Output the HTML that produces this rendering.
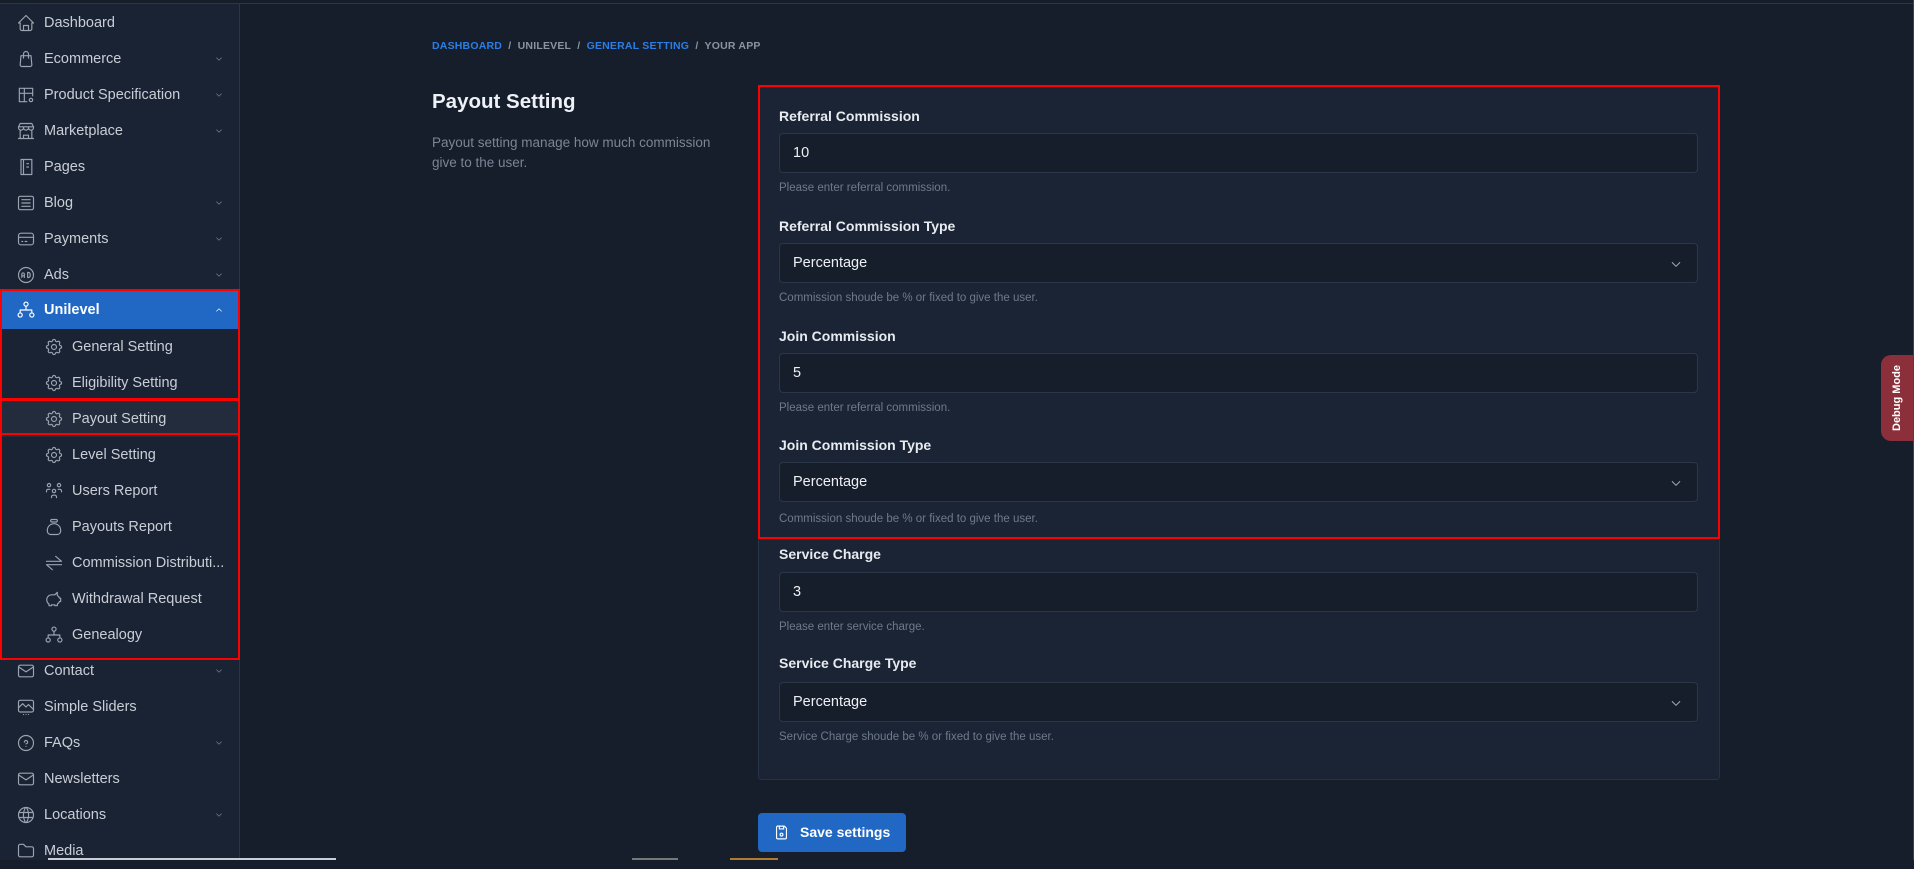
<!DOCTYPE html>
<html><head><meta charset="utf-8"><style>
*{box-sizing:border-box;margin:0;padding:0}
body{width:1914px;height:860px;overflow:hidden;background:#161e2b;font-family:"Liberation Sans",sans-serif;position:relative;color:#dfe3ea}
.topline{position:absolute;left:0;top:3px;width:1914px;height:1px;background:#2b3648}
.side{position:absolute;left:0;top:4px;width:240px;height:856px;background:#1a2334;border-right:1px solid #2a3546}
.it{position:absolute;left:0;width:239px;height:36px;display:flex;align-items:center;font-size:14.5px;color:#c9ced6}
.it svg{position:absolute;left:16px;width:20px;height:20px;fill:none;stroke:#9aa3b0;stroke-width:1.4;stroke-linecap:round;stroke-linejoin:round}
.it span{position:absolute;left:44px}
.it.sub svg{left:44px}
.it.sub span{left:72px}
.it .chev{left:214px;width:10px;height:10px;stroke:#7d8695}
.act{background:#2068c4;color:#fff;font-weight:bold}
.act svg{stroke:#fff}
.red{position:absolute;border:2.5px solid #f00}
.bc{position:absolute;left:432px;top:40px;font-size:10.5px;font-weight:bold;letter-spacing:.2px;color:#8a93a1}
.bc b{color:#2b7ee6}
h1{position:absolute;left:432px;top:90px;font-size:20.5px;font-weight:bold;color:#eef1f5}
.desc{position:absolute;left:432px;top:133px;width:296px;font-size:13.5px;line-height:20px;color:#7b8594}
.card{position:absolute;left:758px;top:86px;width:962px;height:694px;background:#1a2435;border:1px solid #263245;border-radius:3px}
.lbl{position:absolute;left:779px;font-size:14px;font-weight:bold;color:#e8ebf0}
.inp{position:absolute;left:779px;width:919px;height:40px;background:#161e2b;border:1px solid #2b3648;border-radius:4px;font-size:14.5px;color:#eef0f3;padding-left:13px;line-height:38px}
.inp svg{position:absolute;right:14px;top:13px;width:14px;height:14px;fill:none;stroke:#a5adb9;stroke-width:1.6}
.help{position:absolute;left:779px;font-size:11.5px;color:#6f7a89}
.btn{position:absolute;left:758px;top:813px;width:148px;height:39px;background:#2068c4;border-radius:4px;color:#fff;font-size:14px;font-weight:bold;line-height:39px;padding-left:42px}
.btn svg{position:absolute;left:15px;top:11px;width:17px;height:17px;fill:none;stroke:#fff;stroke-width:1.6}
.dbg{position:absolute;left:1881px;top:355px;width:32px;height:86px;background:#8b2f3a;border-radius:10px 0 0 10px}
.dbg span{position:absolute;left:50%;top:50%;transform:translate(-50%,-50%) rotate(-90deg);white-space:nowrap;font-size:11px;font-weight:bold;color:#fff}
</style></head><body>
<div class="topline"></div>
<div class="side"></div>
<div class="it" style="top:5px"><svg viewBox="0 0 24 24"><path d="M5 12H3l9-9 9 9h-2M5 12v7a2 2 0 002 2h10a2 2 0 002-2v-7M9 21v-6h6v6"/></svg><span>Dashboard</span></div>
<div class="it" style="top:41px"><svg viewBox="0 0 24 24"><path d="M6 8h12l1 11a2 2 0 01-2 2H7a2 2 0 01-2-2zM9 11V6a3 3 0 016 0v5"/></svg><span>Ecommerce</span><svg class="chev" viewBox="0 0 24 24"><path d="M6 9l6 6 6-6"/></svg></div>
<div class="it" style="top:77px"><svg viewBox="0 0 24 24"><path d="M4 4h16v9M4 4v16h9M4 10h16M10 4v16"/><circle cx="18" cy="18" r="2"/></svg><span>Product Specification</span><svg class="chev" viewBox="0 0 24 24"><path d="M6 9l6 6 6-6"/></svg></div>
<div class="it" style="top:113px"><svg viewBox="0 0 24 24"><path d="M3 21h18M3 7v1a3 3 0 006 0V7m0 1a3 3 0 006 0V7m0 1a3 3 0 006 0V7H3l2-4h14l2 4M5 21V10.8M19 21V10.8M9 21v-4h6v4"/></svg><span>Marketplace</span><svg class="chev" viewBox="0 0 24 24"><path d="M6 9l6 6 6-6"/></svg></div>
<div class="it" style="top:149px"><svg viewBox="0 0 24 24"><path d="M6 3h13v18H6zM9 3v18M13 8h2M13 12h2"/></svg><span>Pages</span></div>
<div class="it" style="top:185px"><svg viewBox="0 0 24 24"><rect x="3" y="4" width="18" height="16" rx="2"/><path d="M7 8h10M7 12h10M7 16h10"/></svg><span>Blog</span><svg class="chev" viewBox="0 0 24 24"><path d="M6 9l6 6 6-6"/></svg></div>
<div class="it" style="top:221px"><svg viewBox="0 0 24 24"><rect x="3" y="5" width="18" height="14" rx="3"/><path d="M3 10h18M7 15h1M11 15h2"/></svg><span>Payments</span><svg class="chev" viewBox="0 0 24 24"><path d="M6 9l6 6 6-6"/></svg></div>
<div class="it" style="top:257px"><svg viewBox="0 0 24 24"><circle cx="12" cy="12" r="9"/><path d="M7 15v-4a1.5 1.5 0 013 0v4M7 13h3M14 9v6h1a2 2 0 002-2v-2a2 2 0 00-2-2z"/></svg><span>Ads</span><svg class="chev" viewBox="0 0 24 24"><path d="M6 9l6 6 6-6"/></svg></div>
<div class="it act" style="top:291px;height:38px"><svg viewBox="0 0 24 24"><circle cx="12" cy="5" r="2.5"/><circle cx="5" cy="18" r="2.5"/><circle cx="19" cy="18" r="2.5"/><path d="M12 7.5V12M5 15.5V12h14v3.5"/></svg><span>Unilevel</span><svg class="chev" viewBox="0 0 24 24" style="stroke:#fff"><path d="M6 15l6-6 6 6"/></svg></div>
<div class="it sub" style="top:329px"><svg viewBox="0 0 24 24"><path d="M10.3 4.3c.4-1.8 3-1.8 3.4 0a1.7 1.7 0 002.6 1.1c1.5-.9 3.3.8 2.4 2.4a1.7 1.7 0 001 2.5c1.8.4 1.8 3 0 3.4a1.7 1.7 0 00-1 2.6c.9 1.5-.9 3.3-2.4 2.4a1.7 1.7 0 00-2.6 1c-.4 1.8-3 1.8-3.4 0a1.7 1.7 0 00-2.6-1c-1.5.9-3.3-.9-2.4-2.4a1.7 1.7 0 00-1-2.6c-1.8-.4-1.8-3 0-3.4a1.7 1.7 0 001-2.5c-.9-1.6.9-3.3 2.4-2.4a1.7 1.7 0 002.6-1.1z"/><circle cx="12" cy="12" r="3"/></svg><span>General Setting</span></div>
<div class="it sub" style="top:365px"><svg viewBox="0 0 24 24"><path d="M10.3 4.3c.4-1.8 3-1.8 3.4 0a1.7 1.7 0 002.6 1.1c1.5-.9 3.3.8 2.4 2.4a1.7 1.7 0 001 2.5c1.8.4 1.8 3 0 3.4a1.7 1.7 0 00-1 2.6c.9 1.5-.9 3.3-2.4 2.4a1.7 1.7 0 00-2.6 1c-.4 1.8-3 1.8-3.4 0a1.7 1.7 0 00-2.6-1c-1.5.9-3.3-.9-2.4-2.4a1.7 1.7 0 00-1-2.6c-1.8-.4-1.8-3 0-3.4a1.7 1.7 0 001-2.5c-.9-1.6.9-3.3 2.4-2.4a1.7 1.7 0 002.6-1.1z"/><circle cx="12" cy="12" r="3"/></svg><span>Eligibility Setting</span></div>
<div class="it sub" style="top:401px;background:#222c3c"><svg viewBox="0 0 24 24"><path d="M10.3 4.3c.4-1.8 3-1.8 3.4 0a1.7 1.7 0 002.6 1.1c1.5-.9 3.3.8 2.4 2.4a1.7 1.7 0 001 2.5c1.8.4 1.8 3 0 3.4a1.7 1.7 0 00-1 2.6c.9 1.5-.9 3.3-2.4 2.4a1.7 1.7 0 00-2.6 1c-.4 1.8-3 1.8-3.4 0a1.7 1.7 0 00-2.6-1c-1.5.9-3.3-.9-2.4-2.4a1.7 1.7 0 00-1-2.6c-1.8-.4-1.8-3 0-3.4a1.7 1.7 0 001-2.5c-.9-1.6.9-3.3 2.4-2.4a1.7 1.7 0 002.6-1.1z"/><circle cx="12" cy="12" r="3"/></svg><span>Payout Setting</span></div>
<div class="it sub" style="top:437px"><svg viewBox="0 0 24 24"><path d="M10.3 4.3c.4-1.8 3-1.8 3.4 0a1.7 1.7 0 002.6 1.1c1.5-.9 3.3.8 2.4 2.4a1.7 1.7 0 001 2.5c1.8.4 1.8 3 0 3.4a1.7 1.7 0 00-1 2.6c.9 1.5-.9 3.3-2.4 2.4a1.7 1.7 0 00-2.6 1c-.4 1.8-3 1.8-3.4 0a1.7 1.7 0 00-2.6-1c-1.5.9-3.3-.9-2.4-2.4a1.7 1.7 0 00-1-2.6c-1.8-.4-1.8-3 0-3.4a1.7 1.7 0 001-2.5c-.9-1.6.9-3.3 2.4-2.4a1.7 1.7 0 002.6-1.1z"/><circle cx="12" cy="12" r="3"/></svg><span>Level Setting</span></div>
<div class="it sub" style="top:473px"><svg viewBox="0 0 24 24"><circle cx="12" cy="12" r="2"/><circle cx="6" cy="5" r="2"/><circle cx="18" cy="5" r="2"/><path d="M9 20v-1a2 2 0 012-2h2a2 2 0 012 2v1M3 13v-1a2 2 0 012-2h2M21 13v-1a2 2 0 00-2-2h-2"/></svg><span>Users Report</span></div>
<div class="it sub" style="top:509px"><svg viewBox="0 0 24 24"><path d="M9.5 3h5a1.5 1.5 0 010 3h-5a1.5 1.5 0 010-3zM4 17v-1a8 8 0 0116 0v1a4 4 0 01-4 4H8a4 4 0 01-4-4z"/></svg><span>Payouts Report</span></div>
<div class="it sub" style="top:545px"><svg viewBox="0 0 24 24"><path d="M3 10h18L14 4M21 14H3l7 6"/></svg><span>Commission Distributi...</span></div>
<div class="it sub" style="top:581px"><svg viewBox="0 0 24 24"><path d="M16 4v3.8A6 6 0 0118.6 11H20v4h-1.4a6 6 0 01-2.6 3V20h-3v-1h-4v1H6v-2A6 6 0 0110 7h3l3-3z"/></svg><span>Withdrawal Request</span></div>
<div class="it sub" style="top:617px"><svg viewBox="0 0 24 24"><circle cx="12" cy="5" r="2.5"/><circle cx="5" cy="18" r="2.5"/><circle cx="19" cy="18" r="2.5"/><path d="M12 7.5V12M5 15.5V12h14v3.5"/></svg><span>Genealogy</span></div>
<div class="it" style="top:653px"><svg viewBox="0 0 24 24"><rect x="3" y="5" width="18" height="14" rx="2"/><path d="M3 7l9 6 9-6"/></svg><span>Contact</span><svg class="chev" viewBox="0 0 24 24"><path d="M6 9l6 6 6-6"/></svg></div>
<div class="it" style="top:689px"><svg viewBox="0 0 24 24"><rect x="3" y="4" width="18" height="14" rx="2"/><path d="M3 13l5-5 4 4 3-3 6 6M9 21h.01M12 21h.01M15 21h.01"/></svg><span>Simple Sliders</span></div>
<div class="it" style="top:725px"><svg viewBox="0 0 24 24"><circle cx="12" cy="12" r="9"/><path d="M12 16v.01M12 13a2 2 0 10-2-2"/></svg><span>FAQs</span><svg class="chev" viewBox="0 0 24 24"><path d="M6 9l6 6 6-6"/></svg></div>
<div class="it" style="top:761px"><svg viewBox="0 0 24 24"><rect x="3" y="5" width="18" height="14" rx="2"/><path d="M3 7l9 6 9-6"/></svg><span>Newsletters</span></div>
<div class="it" style="top:797px"><svg viewBox="0 0 24 24"><circle cx="12" cy="12" r="9"/><path d="M3.6 9h16.8M3.6 15h16.8M11.5 3a17 17 0 000 18M12.5 3a17 17 0 010 18"/></svg><span>Locations</span><svg class="chev" viewBox="0 0 24 24"><path d="M6 9l6 6 6-6"/></svg></div>
<div class="it" style="top:833px"><svg viewBox="0 0 24 24"><path d="M5 4h4l3 3h7a2 2 0 012 2v8a2 2 0 01-2 2H5a2 2 0 01-2-2V6a2 2 0 012-2"/></svg><span>Media</span></div>

<div class="red" style="left:0;top:289px;width:240px;height:111px"></div>
<div class="red" style="left:0;top:399px;width:240px;height:36px"></div>
<div class="red" style="left:0;top:433px;width:240px;height:227px"></div>

<div style="position:absolute;left:48px;top:858px;width:288px;height:2px;background:#c9ced6"></div>
<div style="position:absolute;left:632px;top:858px;width:46px;height:2px;background:#777"></div>
<div style="position:absolute;left:730px;top:858px;width:48px;height:2px;background:#b07a30"></div>

<div class="bc"><b>DASHBOARD</b> &nbsp;/&nbsp; UNILEVEL &nbsp;/&nbsp; <b>GENERAL SETTING</b> &nbsp;/&nbsp; YOUR APP</div>
<h1>Payout Setting</h1>
<div class="desc">Payout setting manage how much commission give to the user.</div>

<div class="card"></div>

<div class="lbl" style="top:108px">Referral Commission</div>
<div class="inp" style="top:133px">10</div>
<div class="help" style="top:182px">Please enter referral commission.</div>

<div class="lbl" style="top:218px">Referral Commission Type</div>
<div class="inp" style="top:243px">Percentage<svg viewBox="0 0 24 24"><path d="M5 9l7 7 7-7"/></svg></div>
<div class="help" style="top:292px">Commission shoude be % or fixed to give the user.</div>

<div class="lbl" style="top:328px">Join Commission</div>
<div class="inp" style="top:353px">5</div>
<div class="help" style="top:402px">Please enter referral commission.</div>

<div class="lbl" style="top:437px">Join Commission Type</div>
<div class="inp" style="top:462px">Percentage<svg viewBox="0 0 24 24"><path d="M5 9l7 7 7-7"/></svg></div>
<div class="help" style="top:513px">Commission shoude be % or fixed to give the user.</div>

<div class="lbl" style="top:546px">Service Charge</div>
<div class="inp" style="top:572px">3</div>
<div class="help" style="top:621px">Please enter service charge.</div>

<div class="lbl" style="top:655px">Service Charge Type</div>
<div class="inp" style="top:682px">Percentage<svg viewBox="0 0 24 24"><path d="M5 9l7 7 7-7"/></svg></div>
<div class="help" style="top:731px">Service Charge shoude be % or fixed to give the user.</div>

<div class="red" style="left:758px;top:85px;width:962px;height:454px"></div>

<div class="btn"><svg viewBox="0 0 24 24"><path d="M6 3h10l3 3v13a2 2 0 01-2 2H7a2 2 0 01-2-2V5a2 2 0 011-2zM9 3v4h6V3"/><circle cx="12" cy="15" r="2"/></svg>Save settings</div>

<div class="dbg"><span>Debug Mode</span></div>
<div style="position:absolute;left:1913px;top:0;width:1px;height:860px;background:#3a4456"></div>
</body></html>
